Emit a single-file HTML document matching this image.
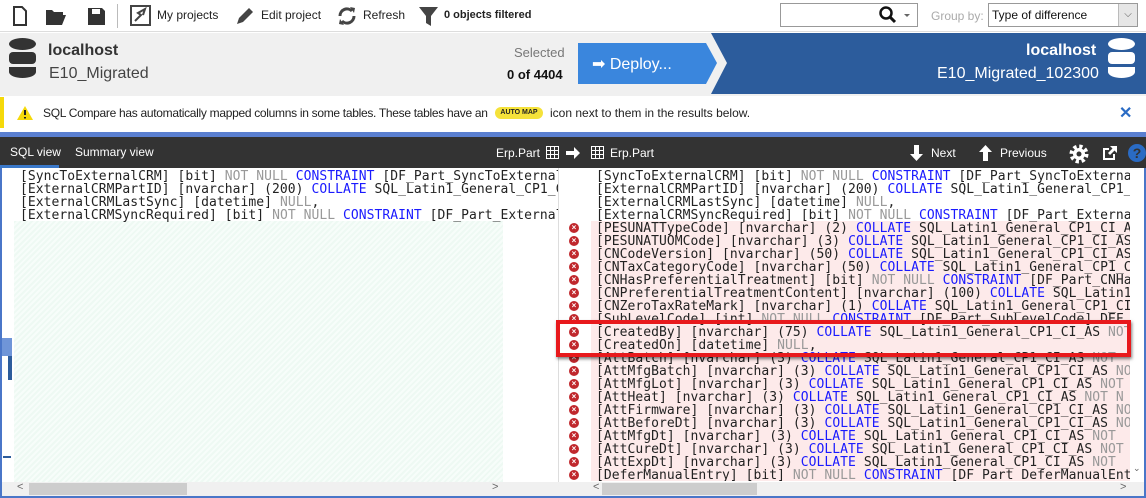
<!DOCTYPE html>
<html><head><meta charset="utf-8"><style>
*{margin:0;padding:0;box-sizing:border-box}
html,body{width:1146px;height:498px;overflow:hidden}
body{background:#fff;font-family:"Liberation Sans",sans-serif;position:relative}
.abs{position:absolute}
.tb{font-size:12px;color:#222;top:8px}
.code{font-family:"DejaVu Sans Mono","Liberation Mono",monospace;font-size:13px;line-height:13px;color:#222;letter-spacing:0.05px}
.g{color:#999}.b{color:#1a1aff}
.ln{height:13px;overflow:hidden;white-space:pre}
.x{position:absolute;left:569px;width:10px;height:10px;border-radius:50%;background:#c0282d;color:#fff;font-size:8px;line-height:10px;text-align:center;font-weight:bold}
</style></head><body>
<div class="abs" style="left:0;top:0;width:1146px;height:32px;background:#fff;border-bottom:1px solid #ddd"></div>
<svg class="abs" style="left:10px;top:5px" width="100" height="22">
<path d="M4 2h8l4 4v14H4z" fill="#fff" stroke="#333" stroke-width="2"/>
<path d="M36 5h6l2 2h9v3H40l-4 10z M36 10h20l-4 10H36z" fill="#333"/>
<path d="M78 3h14l3 3v14H78z" fill="#333"/><rect x="82" y="4" width="8" height="5" fill="#fff"/>
</svg>
<div class="abs" style="left:117px;top:4px;width:1px;height:24px;background:#bbb"></div>
<svg class="abs" style="left:130px;top:5px" width="22" height="22"><rect x="1" y="1" width="19" height="19" fill="#fff" stroke="#444" stroke-width="2"/><path d="M5 16l6-6-3-2 7-4-2 6" stroke="#444" stroke-width="2" fill="none"/></svg>
<div class="abs tb" style="left:157px">My projects</div>
<svg class="abs" style="left:234px;top:5px" width="22" height="22"><path d="M3 19l2-6L15 3l4 4L9 17z" fill="#444"/></svg>
<div class="abs tb" style="left:261px">Edit project</div>
<svg class="abs" style="left:336px;top:5px" width="22" height="22"><path d="M4 11a7 7 0 0 1 12-5M18 11a7 7 0 0 1-12 5" stroke="#444" stroke-width="3" fill="none"/><path d="M14 2l5 1-1 5z M8 20l-5-1 1-5z" fill="#444"/></svg>
<div class="abs tb" style="left:363px">Refresh</div>
<svg class="abs" style="left:418px;top:5px" width="22" height="22"><path d="M1 2h19l-7 9v10l-5-3v-7z" fill="#444"/></svg>
<div class="abs tb" style="left:444px;font-weight:bold;font-size:11px;top:9px">0 objects filtered</div>
<div class="abs" style="left:780px;top:3px;width:138px;height:24px;border:1px solid #999;background:#fff"></div>
<svg class="abs" style="left:856px;top:5px" width="60" height="20"><circle cx="30" cy="8" r="5.5" stroke="#111" stroke-width="2.5" fill="none"/><path d="M34 12l5 5" stroke="#111" stroke-width="3"/><path d="M48 9h6l-3 3z" fill="#666"/></svg>
<div class="abs" style="left:931px;top:9px;font-size:12px;color:#aaa">Group by:</div>
<div class="abs" style="left:988px;top:3px;width:150px;height:24px;border:1px solid #999;background:#fff;font-size:12px;line-height:22px;padding-left:3px;color:#111">Type of difference</div>
<div class="abs" style="left:1118px;top:4px;width:19px;height:22px;background:#e6e6e6;border-left:1px solid #bbb;font-size:10px;color:#555;text-align:center;line-height:22px">⌵</div>
<div class="abs" style="left:0;top:33px;width:1146px;height:63px;background:#f0f0f0"></div>
<svg class="abs" style="left:9px;top:38px" width="28" height="42"><ellipse cx="13.5" cy="6" rx="13.5" ry="6" fill="#333"/><rect x="0" y="14" width="27" height="12" rx="4" fill="#333"/><path d="M0 29h27v5a13.5 6 0 0 1-27 0z" fill="#333"/></svg>
<div class="abs" style="left:48px;top:42px;font-size:16px;font-weight:bold;color:#333">localhost</div>
<div class="abs" style="left:49px;top:65px;font-size:16px;color:#444">E10_Migrated</div>
<div class="abs" style="left:514px;top:45px;font-size:13px;color:#777">Selected</div>
<div class="abs" style="left:507px;top:67px;font-size:13px;font-weight:bold;color:#111">0 of 4404</div>
<svg class="abs" style="left:576px;top:33px" width="570" height="61">
<path d="M135 0H570V61H135L151 30z" fill="#2c5c9c"/>
<path d="M2 10h128l11 20-11 21H2z" fill="#3a86dd"/>
</svg>
<div class="abs" style="left:592px;top:54px;font-size:16px;color:#fff">➡ Deploy...</div>
<div class="abs" style="left:1026px;top:42px;font-size:16px;font-weight:bold;color:#fff">localhost</div>
<div class="abs" style="left:937px;top:65px;font-size:16px;color:#fff">E10_Migrated_102300</div>
<svg class="abs" style="left:1108px;top:38px" width="28" height="42"><ellipse cx="13.5" cy="6" rx="13.5" ry="6" fill="#fff"/><rect x="0" y="14" width="27" height="12" rx="4" fill="#fff"/><path d="M0 29h27v5a13.5 6 0 0 1-27 0z" fill="#fff"/></svg>
<div class="abs" style="left:0;top:97px;width:1146px;height:31px;background:#fff;border-left:4px solid #f5d90a"></div>
<svg class="abs" style="left:16px;top:105px" width="18" height="16"><path d="M9 1L17 15H1z" fill="#f5d90a"/><path d="M9 5v5M9 12v1.5" stroke="#222" stroke-width="2"/></svg>
<div class="abs" style="left:43px;top:106px;font-size:12px;color:#222;white-space:nowrap;letter-spacing:-0.3px">SQL Compare has automatically mapped columns in some tables. These tables have an</div>
<div class="abs" style="left:495px;top:107px;width:48px;height:12px;border-radius:6px;background:#f5e23a;font-size:7px;font-weight:bold;text-align:center;line-height:12px;color:#222">AUTO MAP</div>
<div class="abs" style="left:550px;top:106px;font-size:12px;color:#222;white-space:nowrap">icon next to them in the results below.</div>
<div class="abs" style="left:1119px;top:103px;font-size:16px;font-weight:bold;color:#2a6bc4">✕</div>
<div class="abs" style="left:0;top:132px;width:1146px;height:5px;background:#5a7fd0"></div>
<div class="abs" style="left:0;top:137px;width:1146px;height:31px;background:#333"></div>
<div class="abs" style="left:0;top:165px;width:59px;height:3px;background:#3a78c9"></div>
<div class="abs" style="left:10px;top:145px;font-size:12px;color:#fff">SQL view</div>
<div class="abs" style="left:75px;top:145px;font-size:12px;color:#fff">Summary view</div>
<div class="abs" style="left:496px;top:146px;font-size:12px;color:#fff">Erp.Part</div>
<svg class="abs" style="left:546px;top:146px" width="100" height="14"><rect x="0.5" y="0.5" width="12" height="12" fill="none" stroke="#fff"/><path d="M0 4.5h13M0 8.5h13M4.5 0v13M8.5 0v13" stroke="#fff"/><path d="M20 5h8V1l6 6-6 6V9h-8z" fill="#fff"/><rect x="45.5" y="0.5" width="12" height="12" fill="none" stroke="#fff"/><path d="M45 4.5h13M45 8.5h13M49.5 0v13M53.5 0v13" stroke="#fff"/></svg>
<div class="abs" style="left:610px;top:146px;font-size:12px;color:#fff">Erp.Part</div>
<svg class="abs" style="left:910px;top:145px" width="14" height="16"><path d="M4 0h5v9h4l-6.5 7L0 9h4z" fill="#fff"/></svg>
<div class="abs" style="left:931px;top:146px;font-size:12px;color:#fff">Next</div>
<svg class="abs" style="left:979px;top:145px" width="14" height="16"><path d="M4 16h5V7h4L6.5 0 0 7h4z" fill="#fff"/></svg>
<div class="abs" style="left:1000px;top:146px;font-size:12px;color:#fff">Previous</div>
<svg class="abs" style="left:1068px;top:143px" width="22" height="22"><circle cx="11" cy="11" r="7" fill="none" stroke="#fff" stroke-width="5" stroke-dasharray="3 2.5"/><circle cx="11" cy="11" r="6" fill="#fff"/><circle cx="11" cy="11" r="2.5" fill="#333"/></svg>
<svg class="abs" style="left:1102px;top:145px" width="16" height="16"><path d="M1 3h6v2H3v8h8V9h2v6H1z" fill="#fff"/><path d="M8 1h7v7l-2.5-2.5L8 10 6 8l4.5-4.5z" fill="#fff"/></svg>
<div class="abs" style="left:1128px;top:144px;width:18px;height:18px;border-radius:50%;background:#2a6bc4;color:#333;font-size:14px;font-weight:bold;line-height:18px;text-align:center">?</div>
<div class="abs" style="left:0;top:168px;width:1146px;height:330px;background:#fff;border-left:2px solid #4a76c8;border-right:2px solid #4a76c8;border-bottom:2px solid #4a76c8"></div>
<div class="abs" style="left:14px;top:221px;width:489px;height:262px;background:repeating-linear-gradient(135deg,#eef9f3 0 2px,#f7fdfa 2px 4px)"></div>
<div class="abs" style="left:8px;top:338px;width:4px;height:42px;background:#2c5c9c"></div>
<div class="abs" style="left:2px;top:338px;width:10px;height:18px;background:#6f95d8"></div>
<div class="abs" style="left:3px;top:456px;width:8px;height:2px;background:#2c5c9c"></div>
<div class="abs" style="left:503px;top:168px;width:55px;height:315px;background:#fff"></div>
<div class="abs code" style="left:20px;top:170px;width:538px;overflow:hidden">
<div class="ln">[SyncToExternalCRM] [bit] <span class="g">NOT NULL</span> <span class="b">CONSTRAINT</span> [DF_Part_SyncToExternal</div>
<div class="ln">[ExternalCRMPartID] [nvarchar] (200) <span class="b">COLLATE</span> SQL_Latin1_General_CP1_CI</div>
<div class="ln">[ExternalCRMLastSync] [datetime] <span class="g">NULL</span>,</div>
<div class="ln">[ExternalCRMSyncRequired] [bit] <span class="g">NOT NULL</span> <span class="b">CONSTRAINT</span> [DF_Part_External</div>
</div>
<div class="abs" style="left:558px;top:168px;width:1px;height:315px;background:#ddd"></div>
<div class="abs" style="left:591px;top:221px;width:539px;height:260px;background:#fdeaea"></div>
<div class="abs code" style="left:596px;top:170px;width:534px;height:311px;overflow:hidden">
<div class="ln">[SyncToExternalCRM] [bit] <span class="g">NOT NULL</span> <span class="b">CONSTRAINT</span> [DF_Part_SyncToExternal</div>
<div class="ln">[ExternalCRMPartID] [nvarchar] (200) <span class="b">COLLATE</span> SQL_Latin1_General_CP1_CI</div>
<div class="ln">[ExternalCRMLastSync] [datetime] <span class="g">NULL</span>,</div>
<div class="ln">[ExternalCRMSyncRequired] [bit] <span class="g">NOT NULL</span> <span class="b">CONSTRAINT</span> [DF_Part_External</div>
<div class="ln">[PESUNATTypeCode] [nvarchar] (2) <span class="b">COLLATE</span> SQL_Latin1_General_CP1_CI_AS</div>
<div class="ln">[PESUNATUOMCode] [nvarchar] (3) <span class="b">COLLATE</span> SQL_Latin1_General_CP1_CI_AS</div>
<div class="ln">[CNCodeVersion] [nvarchar] (50) <span class="b">COLLATE</span> SQL_Latin1_General_CP1_CI_AS</div>
<div class="ln">[CNTaxCategoryCode] [nvarchar] (50) <span class="b">COLLATE</span> SQL_Latin1_General_CP1_CI</div>
<div class="ln">[CNHasPreferentialTreatment] [bit] <span class="g">NOT NULL</span> <span class="b">CONSTRAINT</span> [DF_Part_CNHas</div>
<div class="ln">[CNPreferentialTreatmentContent] [nvarchar] (100) <span class="b">COLLATE</span> SQL_Latin1</div>
<div class="ln">[CNZeroTaxRateMark] [nvarchar] (1) <span class="b">COLLATE</span> SQL_Latin1_General_CP1_CI</div>
<div class="ln">[SubLevelCode] [int] <span class="g">NOT NULL</span> <span class="b">CONSTRAINT</span> [DF_Part_SubLevelCode] DEF</div>
<div class="ln">[CreatedBy] [nvarchar] (75) <span class="b">COLLATE</span> SQL_Latin1_General_CP1_CI_AS <span class="g">NOT</span></div>
<div class="ln">[CreatedOn] [datetime] <span class="g">NULL</span>,</div>
<div class="ln">[AttBatch] [nvarchar] (3) <span class="b">COLLATE</span> SQL_Latin1_General_CP1_CI_AS <span class="g">NOT</span></div>
<div class="ln">[AttMfgBatch] [nvarchar] (3) <span class="b">COLLATE</span> SQL_Latin1_General_CP1_CI_AS <span class="g">NOT</span></div>
<div class="ln">[AttMfgLot] [nvarchar] (3) <span class="b">COLLATE</span> SQL_Latin1_General_CP1_CI_AS <span class="g">NOT</span></div>
<div class="ln">[AttHeat] [nvarchar] (3) <span class="b">COLLATE</span> SQL_Latin1_General_CP1_CI_AS <span class="g">NOT N</span></div>
<div class="ln">[AttFirmware] [nvarchar] (3) <span class="b">COLLATE</span> SQL_Latin1_General_CP1_CI_AS <span class="g">NOT</span></div>
<div class="ln">[AttBeforeDt] [nvarchar] (3) <span class="b">COLLATE</span> SQL_Latin1_General_CP1_CI_AS <span class="g">NOT</span></div>
<div class="ln">[AttMfgDt] [nvarchar] (3) <span class="b">COLLATE</span> SQL_Latin1_General_CP1_CI_AS <span class="g">NOT</span></div>
<div class="ln">[AttCureDt] [nvarchar] (3) <span class="b">COLLATE</span> SQL_Latin1_General_CP1_CI_AS <span class="g">NOT</span></div>
<div class="ln">[AttExpDt] [nvarchar] (3) <span class="b">COLLATE</span> SQL_Latin1_General_CP1_CI_AS <span class="g">NOT</span></div>
<div class="ln">[DeferManualEntry] [bit] <span class="g">NOT NULL</span> <span class="b">CONSTRAINT</span> [DF_Part_DeferManualEntry</div>
</div>
<div class="x" style="top:223px">×</div><div class="x" style="top:236px">×</div><div class="x" style="top:249px">×</div><div class="x" style="top:262px">×</div><div class="x" style="top:275px">×</div><div class="x" style="top:288px">×</div><div class="x" style="top:301px">×</div><div class="x" style="top:314px">×</div><div class="x" style="top:327px">×</div><div class="x" style="top:340px">×</div><div class="x" style="top:353px">×</div><div class="x" style="top:366px">×</div><div class="x" style="top:379px">×</div><div class="x" style="top:392px">×</div><div class="x" style="top:405px">×</div><div class="x" style="top:418px">×</div><div class="x" style="top:431px">×</div><div class="x" style="top:444px">×</div><div class="x" style="top:457px">×</div><div class="x" style="top:470px">×</div>
<div class="abs" style="left:556px;top:320px;width:575px;height:37px;border:4px solid #e8191c;box-shadow:1px 2px 3px rgba(0,0,0,.5)"></div>
<div class="abs" style="left:2px;top:482px;width:1142px;height:14px;background:#f0f0f0"></div>
<div class="abs" style="left:29px;top:483px;width:158px;height:12px;background:#cdcdcd"></div>
<div class="abs" style="left:602px;top:483px;width:155px;height:12px;background:#cdcdcd"></div>
<div class="abs" style="left:17px;top:481px;font-size:11px;color:#666">&lt;</div>
<div class="abs" style="left:492px;top:481px;font-size:11px;color:#666">&gt;</div>
<div class="abs" style="left:593px;top:481px;font-size:11px;color:#666">&lt;</div>
<div class="abs" style="left:1120px;top:481px;font-size:11px;color:#666">&gt;</div>
<div class="abs" style="left:1133px;top:463px;font-size:9px;color:#666">⌄</div>
</body></html>
